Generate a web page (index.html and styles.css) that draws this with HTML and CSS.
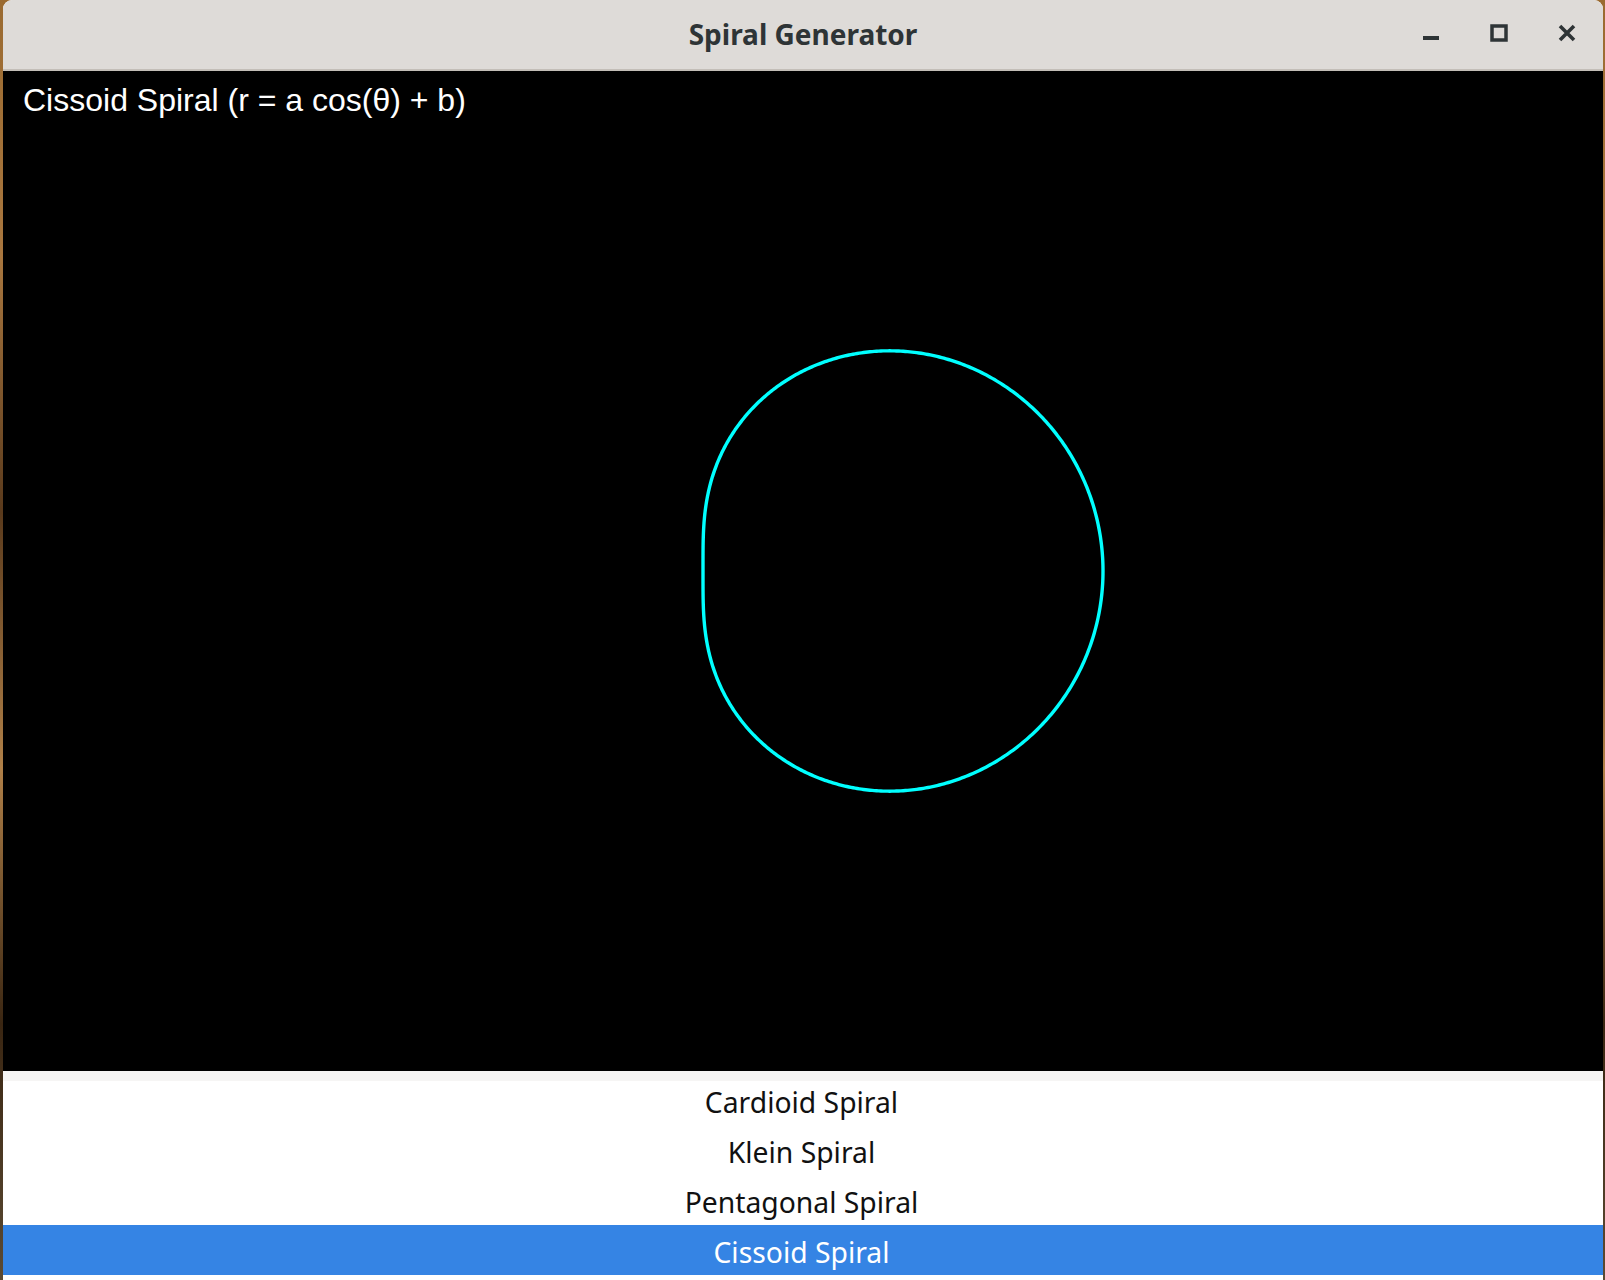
FILE: index.html
```html
<!DOCTYPE html>
<html lang="en">
<head>
<meta charset="utf-8">
<title>Spiral Generator</title>
<link rel="stylesheet" href="styles.css">
</head>
<body>
<div class="window">
  <header class="titlebar">
    <div class="tb-spacer"></div>
    <div class="tb-title">Spiral Generator</div>
    <div class="tb-buttons">
      <button class="tb-btn" aria-label="Minimize">
        <svg width="18" height="18" viewBox="0 0 18 18"><rect x="1" y="12" width="16" height="4" fill="#2e3436"/></svg>
      </button>
      <button class="tb-btn" aria-label="Maximize">
        <svg width="18" height="18" viewBox="0 0 18 18"><rect x="2" y="2" width="14" height="14" fill="none" stroke="#2e3436" stroke-width="3.5"/></svg>
      </button>
      <button class="tb-btn" aria-label="Close">
        <svg width="18" height="18" viewBox="0 0 18 18"><path d="M2 2 L16 16 M16 2 L2 16" stroke="#2e3436" stroke-width="3.6" stroke-linecap="butt"/></svg>
      </button>
    </div>
  </header>
  <main class="canvas">
    <svg class="plot" width="1600" height="1000" viewBox="0 0 1600 1000">
      <text class="plot-label" x="20" y="40">Cissoid Spiral (r = a cos(θ) + b)</text>
      <path id="curve" class="curve" d=""/>
    </svg>
  </main>
  <section class="list-area">
    <div class="list-shade"></div>
    <div class="list-viewport">
      <ul class="list">
        <li class="row">Cardioid Spiral</li>
        <li class="row">Klein Spiral</li>
        <li class="row">Pentagonal Spiral</li>
        <li class="row selected">Cissoid Spiral</li>
      </ul>
    </div>
  </section>
</div>
<script src="script.js"></script>
</body>
</html>
```

FILE: styles.css
```css
* { box-sizing: border-box; }
html, body {
  margin: 0;
  padding: 0;
}
body {
  width: 1605px;
  height: 1280px;
  overflow: hidden;
  background: linear-gradient(180deg, #9a6a30 0%, #a9773f 20%, #5a3a1c 40%, #b08048 60%, #3a2612 80%, #5b4a33 100%);
  padding-left: 3px;
}
.window {
  width: 1600px;
  height: 1280px;
  border-radius: 9px 9px 0 0;
  overflow: hidden;
  display: flex;
  flex-direction: column;
  background: #ffffff;
}
.titlebar {
  height: 71px;
  flex: 0 0 71px;
  background: #dedbd8;
  border-bottom: 2px solid #c3beb8;
  display: grid;
  grid-template-columns: 1fr auto 1fr;
  align-items: center;
}
.tb-title {
  font-family: "Noto Sans", "DejaVu Sans", sans-serif;
  font-weight: 700;
  font-size: 28px;
  color: #2e3436;
  padding-bottom: 1px;
}
.tb-buttons {
  display: flex;
  justify-content: flex-end;
  padding-right: 2px;
  align-self: start;
  padding-top: 24px;
}
.tb-btn {
  width: 68px;
  height: 18px;
  border: 0;
  padding: 0;
  margin: 0;
  background: transparent;
  display: flex;
  justify-content: center;
  align-items: center;
}
.tb-btn svg { display: block; }
.canvas {
  height: 1000px;
  flex: 0 0 1000px;
  background: #000;
}
.plot { display: block; }
.plot-label {
  font-family: "Liberation Sans", Arial, sans-serif;
  font-size: 32px;
  fill: #ffffff;
}
.curve {
  fill: none;
  stroke: #00ffff;
  stroke-width: 3.4;
}
.list-area {
  flex: 1 1 auto;
  display: flex;
  flex-direction: column;
  background: #ffffff;
}
.list-shade {
  height: 10px;
  flex: 0 0 10px;
  background: #f6f5f4;
}
.list-viewport {
  flex: 1 1 auto;
  overflow: hidden;
}
.list {
  list-style: none;
  margin: -6px 0 0 0;
  padding: 0;
}
.row {
  height: 50px;
  line-height: 50px;
  padding-top: 2px;
  padding-right: 3px;
  text-align: center;
  font-family: "Noto Sans", "Open Sans", sans-serif;
  font-size: 28.3px;
  color: #111111;
}
.row.selected {
  background: #3584e4;
  color: #ffffff;
}
```

FILE: script.js
```js
(function () {
  var cx = 800, cy = 500, a = 100, b = 200;
  var pts = [];
  var n = 720;
  for (var i = 0; i <= n; i++) {
    var t = (i / n) * Math.PI * 2;
    var r = a * Math.cos(t) + b;
    var x = cx + r * Math.cos(t);
    var y = cy - r * Math.sin(t);
    pts.push((i === 0 ? "M" : "L") + x.toFixed(2) + " " + y.toFixed(2));
  }
  document.getElementById("curve").setAttribute("d", pts.join(" ") + " Z");
})();
```
